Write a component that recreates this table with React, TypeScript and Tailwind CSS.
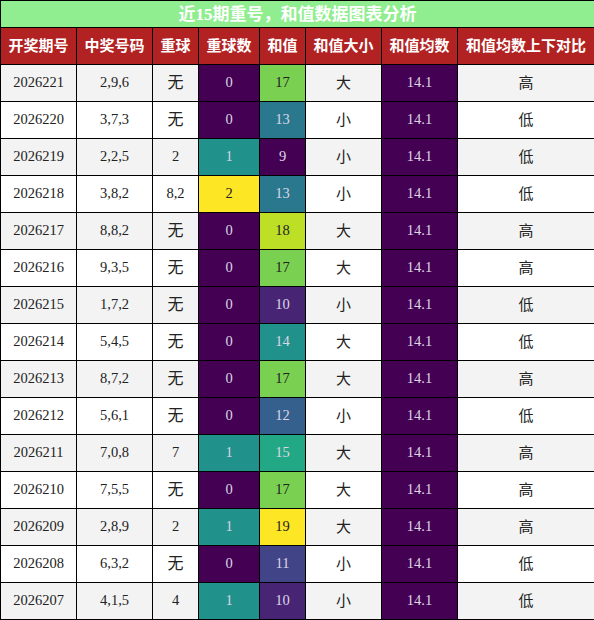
import React from "react";

const V: Record<number, string> = {
  9: "#440154",
  10: "#482475",
  11: "#414487",
  12: "#355f8d",
  13: "#2a788e",
  14: "#21918c",
  15: "#22a884",
  16: "#44bf70",
  17: "#7ad151",
  18: "#bddf26",
  19: "#fde725",
};

const REPEAT: Record<number, string> = {
  0: "#440154",
  1: "#21918c",
  2: "#fde725",
};

const rows: [string, string, string, number, number][] = [
  ["2026221", "2,9,6", "无", 0, 17],
  ["2026220", "3,7,3", "无", 0, 13],
  ["2026219", "2,2,5", "2", 1, 9],
  ["2026218", "3,8,2", "8,2", 2, 13],
  ["2026217", "8,8,2", "无", 0, 18],
  ["2026216", "9,3,5", "无", 0, 17],
  ["2026215", "1,7,2", "无", 0, 10],
  ["2026214", "5,4,5", "无", 0, 14],
  ["2026213", "8,7,2", "无", 0, 17],
  ["2026212", "5,6,1", "无", 0, 12],
  ["2026211", "7,0,8", "7", 1, 15],
  ["2026210", "7,5,5", "无", 0, 17],
  ["2026209", "2,8,9", "2", 1, 19],
  ["2026208", "6,3,2", "无", 0, 11],
  ["2026207", "4,1,5", "4", 1, 10],
];

const headers = ["开奖期号", "中奖号码", "重球", "重球数", "和值", "和值大小", "和值均数", "和值均数上下对比"];
const widths = ["w-[76px]", "w-[76px]", "w-[46px]", "w-[61px]", "w-[46px]", "w-[76px]", "w-[76px]", "w-[137px]"];

// light cells get dark text, dark cells get pale text
const isLight = (c: string) => ["#7ad151", "#bddf26", "#fde725"].includes(c);

export default function App() {
  return (
    <div className="w-[594px] h-[620px] bg-white font-['Liberation_Serif','Noto_Sans_CJK_SC',serif]">
      <table className="w-[594px] table-fixed border-collapse border border-black">
        <colgroup>
          {widths.map((w, i) => (
            <col key={i} className={w} />
          ))}
        </colgroup>
        <thead>
          <tr className="h-[27px] bg-[#90ee90]">
            <th colSpan={8} className="border border-black p-0 text-[17px] font-bold text-white leading-none">
              近15期重号，和值数据图表分析
            </th>
          </tr>
          <tr className="h-[37px] bg-[#b22222]">
            {headers.map((h) => (
              <th key={h} className="border border-black p-0 text-[15px] font-bold text-white">
                {h}
              </th>
            ))}
          </tr>
        </thead>
        <tbody>
          {rows.map(([issue, nums, rep, cnt, sum], i) => {
            const cntColor = REPEAT[cnt];
            const sumColor = V[sum];
            return (
              <tr key={issue} className={`h-[37px] text-center text-[#222] ${i % 2 === 0 ? "bg-[#f3f3f3]" : "bg-white"}`}>
                <td className="border border-black p-0 text-[14.5px]">{issue}</td>
                <td className="border border-black p-0 text-[14.5px]">{nums}</td>
                <td className={`border border-black p-0 ${rep === "无" ? "text-[16px]" : "text-[14.5px]"}`}>{rep}</td>
                <td
                  className={`border border-black p-0 text-[14.5px] ${isLight(cntColor) ? "text-[#222]" : "text-[#ddd5e6]"}`}
                  style={{ backgroundColor: cntColor }}
                >
                  {cnt}
                </td>
                <td
                  className={`border border-black p-0 text-[14.5px] ${isLight(sumColor) ? "text-[#222]" : "text-[#ddd5e6]"}`}
                  style={{ backgroundColor: sumColor }}
                >
                  {sum}
                </td>
                <td className="border border-black p-0 text-[15px]">{sum >= 14 ? "大" : "小"}</td>
                <td className="border border-black p-0 text-[14.5px] bg-[#440154] text-[#ddd5e6]">14.1</td>
                <td className="border border-black p-0 text-[15px]">{sum > 14.1 ? "高" : "低"}</td>
              </tr>
            );
          })}
        </tbody>
      </table>
    </div>
  );
}
